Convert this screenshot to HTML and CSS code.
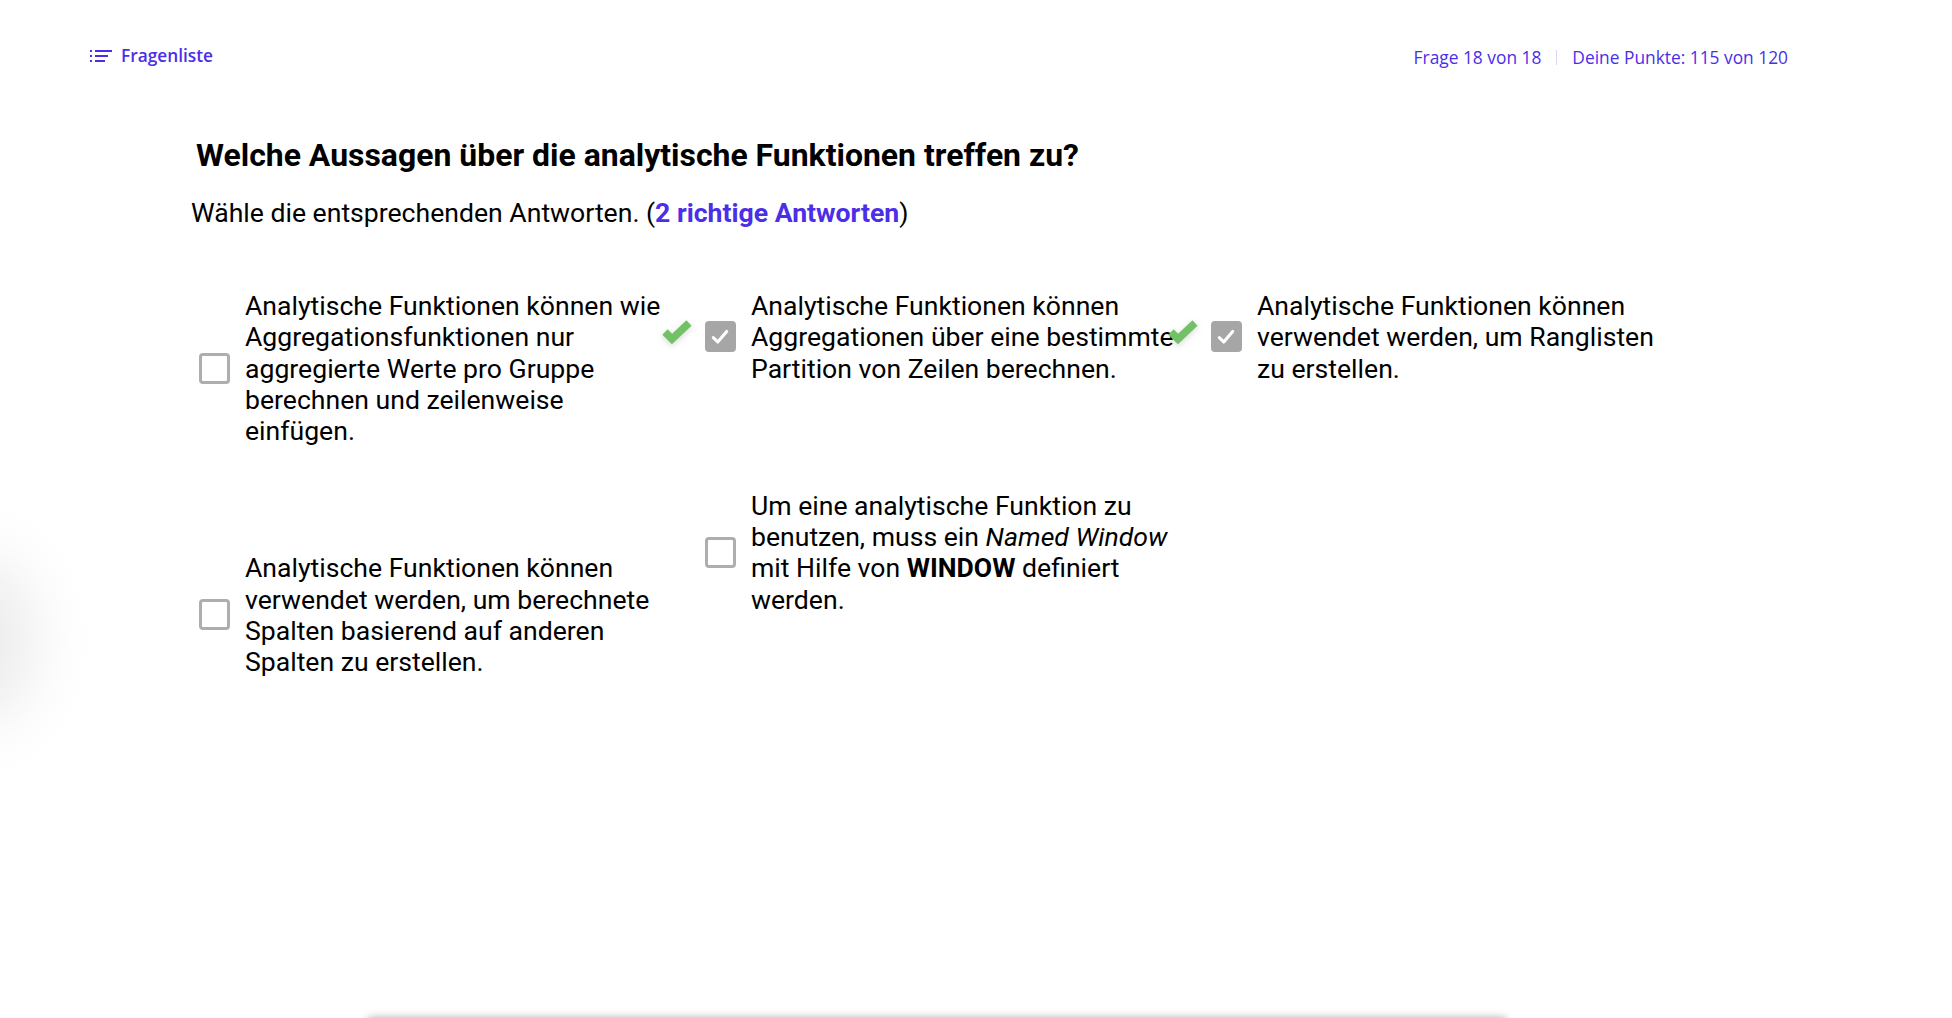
FILE: index.html
```html
<!DOCTYPE html>
<html lang="de">
<head>
<meta charset="utf-8">
<title>Quiz</title>
<link rel="stylesheet" href="styles.css">
</head>
<body>
<div class="glow"></div>
<header class="topbar">
  <a class="list-link">
    <svg class="list-icon" width="22" height="14" viewBox="0 0 22 14"><g fill="#4a2ee8"><rect x="0" y="1" width="2" height="2"/><rect x="0" y="6" width="2" height="2"/><rect x="0" y="11" width="2" height="2"/><rect x="5" y="1" width="17" height="2"/><rect x="5" y="6" width="13" height="2"/><rect x="5" y="11" width="10" height="2"/></g></svg>
    <span>Fragenliste</span>
  </a>
  <div class="status">
    <span>Frage 18 von 18</span>
    <i class="sep"></i>
    <span>Deine Punkte: 115 von 120</span>
  </div>
</header>
<main class="quiz">
  <h1 class="title">Welche Aussagen über die analytische Funktionen treffen zu?</h1>
  <p class="hint">Wähle die entsprechenden Antworten. (<b>2 richtige Antworten</b>)</p>
  <div class="answers">
    <div class="col">
      <div class="answer"><span class="box"></span><div class="text">Analytische Funktionen können wie Aggregationsfunktionen nur aggregierte Werte pro Gruppe berechnen und zeilenweise einfügen.</div></div>
      <div class="answer"><span class="box"></span><div class="text">Analytische Funktionen können verwendet werden, um berechnete Spalten basierend auf anderen Spalten zu erstellen.</div></div>
    </div>
    <div class="col">
      <div class="answer"><svg class="ok" width="32" height="28" viewBox="0 0 32 28"><path d="M4 15l7 7L28 6" fill="none" stroke="#73c166" stroke-width="7.500"/></svg><span class="box on"><svg width="20" height="18" viewBox="0 0 18 16"><path d="M3 8.500l4 4L15 3" fill="none" stroke="#fff" stroke-width="2.800" stroke-linecap="round" stroke-linejoin="round"/></svg></span><div class="text">Analytische Funktionen können Aggregationen über eine bestimmte Partition von Zeilen berechnen.</div></div>
      <div class="answer"><span class="box"></span><div class="text">Um eine analytische Funktion zu benutzen, muss ein <em>Named Window</em> mit Hilfe von <strong>WINDOW</strong> definiert werden.</div></div>
    </div>
    <div class="col">
      <div class="answer"><svg class="ok" width="32" height="28" viewBox="0 0 32 28"><path d="M4 15l7 7L28 6" fill="none" stroke="#73c166" stroke-width="7.500"/></svg><span class="box on"><svg width="20" height="18" viewBox="0 0 18 16"><path d="M3 8.500l4 4L15 3" fill="none" stroke="#fff" stroke-width="2.800" stroke-linecap="round" stroke-linejoin="round"/></svg></span><div class="text">Analytische Funktionen können verwendet werden, um Ranglisten zu erstellen.</div></div>
    </div>
  </div>
</main>
<div class="sheet"></div>
</body>
</html>
```
FILE: styles.css
```css
* { box-sizing: border-box; }
html, body { margin: 0; height: 100%; }
body {
  position: relative;
  overflow: hidden;
  background: #fff;
  color: #000;
  font-family: Roboto, "Liberation Sans", sans-serif;
}
.glow {
  position: absolute;
  left: -85px;
  top: 555px;
  width: 120px;
  height: 170px;
  border-radius: 50%;
  background: #ececec;
  filter: blur(30px);
}
.topbar {
  position: relative;
  display: flex;
  justify-content: space-between;
  align-items: center;
  padding: 43px 164px 0 90px;
  font-family: "Open Sans", "Liberation Sans", sans-serif;
  color: #4a2ee8;
}
.list-link {
  display: flex;
  align-items: center;
  gap: 9px;
  font-size: 17.300px;
  font-weight: 600;
  line-height: 24px;
}
.status {
  display: flex;
  align-items: center;
  gap: 15px;
  font-size: 17.350px;
  line-height: 24px;
  padding-top: 2px;
}
.sep { width: 1px; height: 15px; background: #d9d5f7; }
.quiz { position: relative; padding: 67px 0 0 191px; }
.title {
  margin: 0 0 0 5px;
  font-size: 31.950px;
  line-height: 38px;
  font-weight: 700;
}
.hint {
  margin: 22px 0 0;
  font-size: 26.600px;
  line-height: 34px;
}
.hint b { color: #4a2ee8; font-weight: 700; }
.answers { display: flex; margin-top: 60px; }
.col {
  width: 506px;
  display: flex;
  flex-direction: column;
  gap: 106px;
}
.answer {
  position: relative;
  display: flex;
  align-items: center;
  gap: 15.500px;
  padding-left: 7.500px;
}
.box {
  flex: none;
  width: 31px;
  height: 31px;
  display: flex;
  align-items: center;
  justify-content: center;
  border: 3px solid #aeaeae;
  border-radius: 4px;
  background: #fff;
}
.box.on { background: #a6a6a6; border-color: #a6a6a6; }
.text {
  width: 428px;
  font-size: 26.600px;
  line-height: 31.250px;
}
.ok {
  position: absolute;
  left: -36px;
  top: 27px;
  filter: drop-shadow(0 2px 3px rgba(0,0,0,.15));
}
.sheet {
  position: absolute;
  left: 368px;
  right: 446px;
  bottom: -10px;
  height: 10px;
  box-shadow: 0 0 8px rgba(0,0,0,.35);
}
```
